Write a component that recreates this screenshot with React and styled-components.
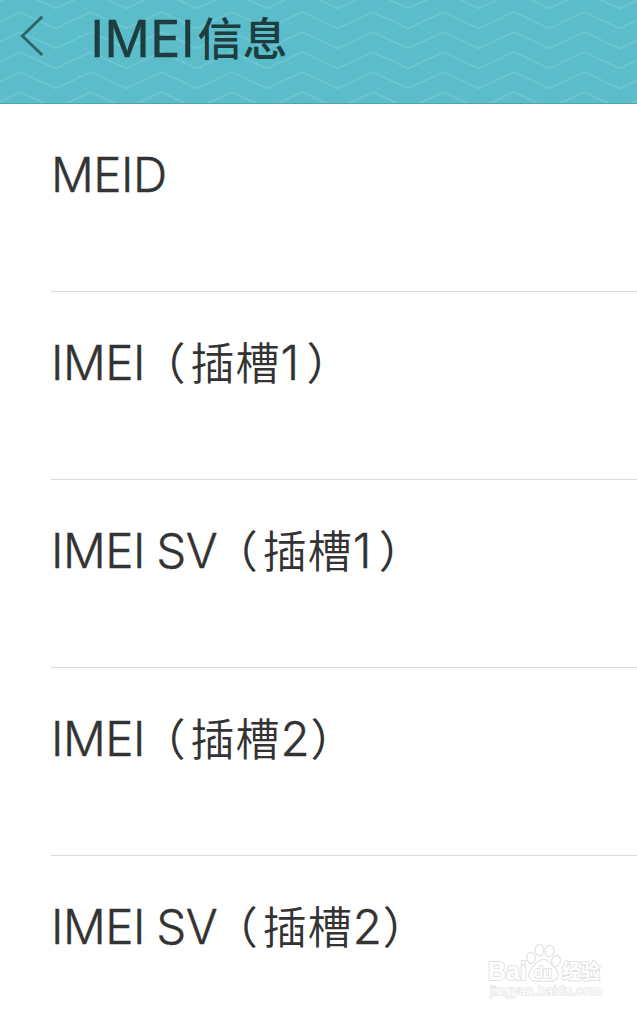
import React from 'react';
import styled, { createGlobalStyle } from 'styled-components';

const rows = [
  { name: 'MEID' },
  { name: 'IMEI', slot: '1' },
  { name: 'IMEI SV', slot: '1' },
  { name: 'IMEI', slot: '2' },
  { name: 'IMEI SV', slot: '2' },
];

const waveTops = [-28, -8, 12, 32, 52, 72, 92];

// one zigzag line across the header, its peaks at the given height
function zigzag(top) {
  const points = [];
  for (let i = -1; i < 19; i += 1) {
    points.push(`${20.4 + i * 35.25},${i % 2 === 0 ? top : top + 16.5}`);
  }
  return points.join(' ');
}

export default function App() {
  return (
    <Screen>
      <GlobalStyle />
      <Header>
        <WaveLayer width="637" height="103">
          {waveTops.map((top) => (
            <polyline key={top} points={zigzag(top)} fill="none" stroke="#6dc5d1" strokeWidth="1.9" />
          ))}
        </WaveLayer>
        <BackButton aria-label="返回">
          <svg width="26" height="44" viewBox="0 0 26 44" fill="none">
            <path d="M22.2 2.7 2.3 22 22.2 41" stroke="#2f6469" strokeWidth="2.9" />
          </svg>
        </BackButton>
        <Title>
          IMEI<TitleHan>信息</TitleHan>
        </Title>
      </Header>
      <List>
        {rows.map((row) => (
          <Row key={row.name + row.slot}>
            <Name>{row.name}</Name>
            {row.slot && (
              <Slot>
                <Paren $shift={-4}>（</Paren>插槽<Digit $width={row.slot === '1' ? 18 : 22}>{row.slot}</Digit>
                <Paren $shift={8}>）</Paren>
              </Slot>
            )}
          </Row>
        ))}
      </List>
      <Watermark />
    </Screen>
  );
}

function Watermark() {
  return (
    <Mark width="124" height="62" viewBox="0 0 124 62">
      <g fill="#fff" stroke="#e2e2e2" strokeWidth="1.2">
        <ellipse cx="46" cy="18" rx="4.4" ry="5.6" transform="rotate(-12 46 18)" />
        <ellipse cx="54.5" cy="10" rx="4.4" ry="5.8" />
        <ellipse cx="64.5" cy="11" rx="4.4" ry="5.8" transform="rotate(10 64.5 11)" />
        <ellipse cx="71" cy="21" rx="4.4" ry="5.6" transform="rotate(12 71 21)" />
        <path d="M58.5 19.5C53 19.5 51 24 48 27C44.5 30 42.5 34 44.5 38C47 42.5 53 41 58.5 41C64 41 70 42.5 72.5 38C74.5 34 72.5 30 69 27C66 24 64 19.5 58.5 19.5Z" />
      </g>
      <MarkText x="3" y="40" $size={25} textLength="39">Bai</MarkText>
      <MarkText x="49" y="37.5" $size={17} textLength="18">du</MarkText>
      <MarkText x="77" y="38.5" $size={20} textLength="38">经验</MarkText>
      <MarkText x="5" y="55" $size={13.5} $thin textLength="112">jingyan.baidu.com</MarkText>
    </Mark>
  );
}

const GlobalStyle = createGlobalStyle`
body {
  margin: 0;
  background: #fff;
}
`;
const Screen = styled.div`
position: relative;
width: 637px;
height: 1013px;
overflow: hidden;
background: #fff;
color: #333;
font-family: Inter, "Noto Sans CJK SC", sans-serif;
`;
const Header = styled.header`
position: relative;
display: flex;
align-items: flex-start;
box-sizing: border-box;
height: 104px;
background: #5bbdca;
border-bottom: 1px solid #4da6b2;
`;
const WaveLayer = styled.svg`
position: absolute;
left: 0;
top: 0;
`;
const BackButton = styled.button`
position: relative;
display: flex;
align-items: flex-start;
width: 72px;
height: 74px;
padding: 14px 0 0 20px;
border: none;
background: none;
`;
const Title = styled.h1`
position: relative;
margin: 0 0 0 18.5px;
height: 78px;
line-height: 78px;
font-size: 50px;
font-weight: 400;
letter-spacing: 0.6px;
white-space: nowrap;
color: #1e3d40;
-webkit-text-stroke: 0.4px #1e3d40;
`;
const TitleHan = styled.span`
margin-left: 2.5px;
font-family: "Noto Sans CJK SC", sans-serif;
font-size: 45px;
font-weight: 500;
letter-spacing: 0;
line-height: 1;
vertical-align: 1px;
-webkit-text-stroke: 0;
`;
const List = styled.ul`
margin: 0;
padding: 0 0 0 51px;
list-style: none;
`;
const Row = styled.li`
display: flex;
align-items: baseline;
box-sizing: border-box;
height: 188px;
line-height: 142px;
border-bottom: 1px solid #d9d9d9;
white-space: nowrap;

&:last-child {
  border-bottom: none;
}
`;
const Name = styled.span`
font-size: 47.5px;
font-weight: 300;
letter-spacing: -0.5px;
word-spacing: -1.5px;
-webkit-text-stroke: 0.4px #333;
`;
const Slot = styled.span`
margin-left: 0.5px;
font-family: "Noto Sans CJK SC", sans-serif;
font-size: 44px;
font-weight: 350;
letter-spacing: 1px;
line-height: 1;
`;
const Paren = styled.span`
position: relative;
left: ${(props) => props.$shift}px;
font-weight: 400;
`;
const Digit = styled.span`
display: inline-block;
width: ${(props) => props.$width}px;
font-family: Inter, sans-serif;
font-size: 47.5px;
font-weight: 300;
letter-spacing: 0;
-webkit-text-stroke: 0.4px #333;
`;
const Mark = styled.svg`
position: absolute;
left: 485px;
top: 940px;
`;
const MarkText = styled.text.attrs({ lengthAdjust: 'spacingAndGlyphs' })`
font-family: "Liberation Sans", "Noto Sans CJK SC", sans-serif;
font-size: ${(props) => props.$size}px;
font-weight: ${(props) => (props.$thin ? 400 : 700)};
fill: #fff;
stroke: #e2e2e2;
stroke-width: ${(props) => (props.$thin ? 1.3 : 1.8)}px;
paint-order: stroke;
`;
